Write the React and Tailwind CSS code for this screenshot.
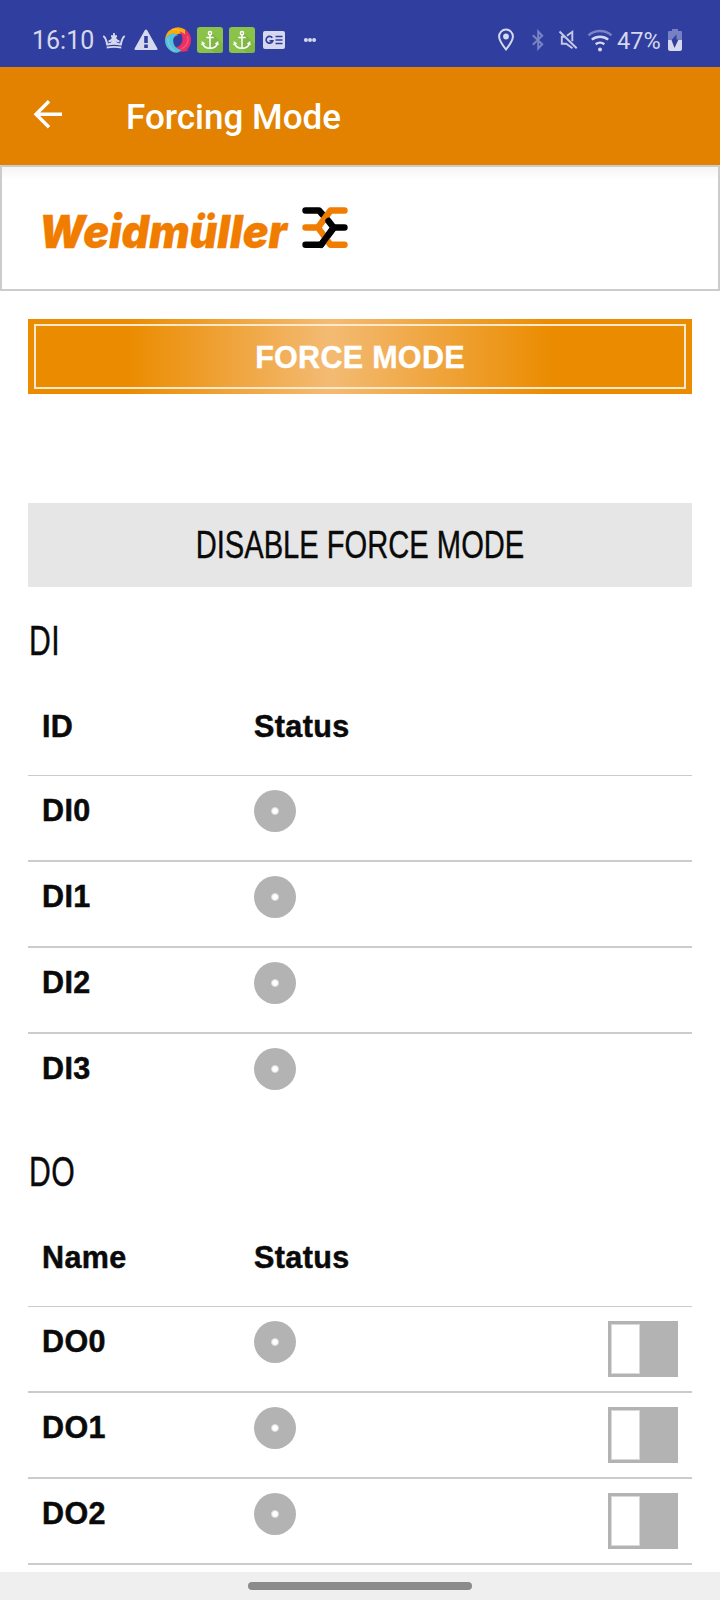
const helv = "font-['Liberation_Sans',Arial,sans-serif]";

function StatusIcons() {
  return (
    <svg className="block h-8 w-[216px] shrink-0" viewBox="102 24 216 32" fill="#d6d8ed">
      <path d="M103.200 36.200c2.400 1 3 3.200 3.900 8.200 4.600-.9 9.200-.9 13.800 0 .9-5 1.500-7.200 3.900-8.200M108.500 41.500c2.200-.2 4-1.200 4.500-4.500M119.500 41.500c-2.200-.2-4-1.200-4.500-4.500" fill="none" stroke="#d6d8ed" strokeWidth="2" />
      <path d="M113.100 33h1.800v2.200h2.100v2h-1.800c.3 2.800.9 4 2.300 5.800h-7c1.400-1.800 2-3 2.300-5.800H111v-2h2.100z" />
      <path d="M106.700 46.600c4.800-.9 9.800-.9 14.600 0v1.800c-4.800-.8-9.800-.8-14.600 0z" />
      <path fillRule="evenodd" d="M146 29.500c.6 0 .9.300 1.200.8l10.200 18.300c.4.800 0 1.400-.8 1.400h-21.200c-.8 0-1.200-.6-.8-1.400l10.200-18.300c.3-.5.600-.8 1.200-.8zM144.200 36v7h3.600v-7zM144.200 44.600v3.400h3.600v-3.400z" />
      <path d="M165 40a13 13 0 0 1 20.500-10.300c-.2 1.500-.2 3 .3 5-3-1.400-6-1.400-8.500-.2-4.500-.3-8.800 1.500-12.300 5.500z" fill="#ffa808" />
      <path d="M179.500 31c2.500.8 4.800 2.200 6.300 3.700-.5-1.500-.6-3.500-.3-5 3.500 2.500 5.500 6.300 5.500 10.300s-1.500 7.500-4.300 10h3c-4.700 1.800-10.700 3.500-17.200-2.500 6 .5 10-3 10-8.500 0-3-1.200-5.500-3-8z" fill="#ed2f62" />
      <path d="M165 40c1.500-4.500 5-7 9.500-6.300 1.300.2 2.500.8 3.500 1.600-3.500.4-5 3-4.800 6 .3 4.500 3.300 7.700 8.300 8.700-1.500 1.700-3.200 2.500-5 2.800-6.500-.5-11.500-5.800-11.500-12.800z" fill="#56bfd9" />
      <path d="M172 29.500c5-.8 8.500.6 13 4.500M187.500 36c1.500 5-.5 10-6 13M168 38c-.5 5 2 10 7 13.500" fill="none" stroke="#fff" strokeOpacity=".22" strokeWidth="1.200" />
      {[197, 229].map((x) => (
        <g key={x} transform={`translate(${x} 27)`}>
          <rect width="26" height="26" rx="3" fill="#8bc34a" />
          <path d="M15 6l11 11v6a3 3 0 0 1-3 3H18l-7-7z" fill="#7cb342" fillOpacity=".75" />
          <g fill="none" stroke="#fff" strokeWidth="1.500">
            <circle cx="13" cy="6.200" r="1.600" />
            <path d="M13 8v13.500M9.300 10.500h7.400M5.500 16c1 3.800 4 5.300 7.500 5.300s6.500-1.500 7.500-5.300" />
          </g>
          <path d="M4.300 18.200l.5-4.200 3.500 2.700zM21.700 18.200l-.5-4.200-3.500 2.700z" fill="#fff" />
        </g>
      ))}
      <rect x="263" y="31" width="22" height="18" rx="2" />
      <path d="M272.300 37.800a3.400 3.400 0 1 0 .5 3h-3.300M275.500 36.500h7M275.500 40h7M275.500 43.500h7" fill="none" stroke="#303f9f" strokeWidth="1.700" />
      <circle cx="305.900" cy="40" r="2" />
      <circle cx="310" cy="40" r="2" />
      <circle cx="314.100" cy="40" r="2" />
    </svg>
  );
}

function SystemIcons() {
  return (
    <svg className="block h-8 w-[116px] shrink-0" viewBox="496 24 116 32" fill="none" stroke="#d6d8ed">
      <path d="M506 49.500c-4.500-5.700-6.900-9.500-6.900-13a6.900 6.900 0 0 1 13.800 0c0 3.500-2.400 7.300-6.900 13z" strokeWidth="2" />
      <circle cx="506" cy="36.500" r="2.900" fill="#d6d8ed" stroke="none" />
      <path d="M532.800 35.300l9.400 8.900-4 4.200V31.600l4 4.200-9.400 8.900" stroke="#7a83c5" strokeWidth="2" />
      <path d="M559.500 31.500l17.200 16.800M564.800 36.700h-3v7h4.500l6.200 4.500M567 35.800l5.300-4v9.500" strokeWidth="1.900" stroke="#c6c9e5" />
      <path d="M588.500 35.300c6.500-5.800 16.500-5.800 23 0" stroke="#7a83c5" strokeWidth="2.400" />
      <path d="M591.800 39.700c4.700-4 11.700-4 16.400 0M595.700 44.300c2.500-2 6.100-2 8.600 0" strokeWidth="2.400" />
      <circle cx="600" cy="49.500" r="2" fill="#d6d8ed" stroke="none" />
    </svg>
  );
}

function Battery() {
  return (
    <svg className="block h-8 w-4 shrink-0" viewBox="667 24 16 32">
      <path d="M672 29h6v2h3a1 1 0 0 1 1 1v8h-14v-8a1 1 0 0 1 1-1h3z" fill="#7780c2" />
      <path d="M668 40h14v9a2 2 0 0 1-2 2h-10a2 2 0 0 1-2-2z" fill="#d6d8ed" />
      <path d="M676.500 34.500v5h2l-4 8.500-3-8z" fill="#303f9f" />
    </svg>
  );
}

function Logo() {
  return (
    <svg className="block h-[60px] w-[320px]" viewBox="36 198 320 60">
      <text x="39" y="248" textLength="248" lengthAdjust="spacingAndGlyphs" fill="#f07d00" stroke="#f07d00" strokeWidth=".3" className="font-['Inter',sans-serif] text-[45px] font-black italic">
        Weidmüller
      </text>
      <g fill="none" strokeWidth="6.400" strokeLinecap="round" strokeLinejoin="round">
        <path d="M305.500 210.500h13.500l8 9M305.500 244.800h15.500l13-17.300" stroke="#000" />
        <path d="M344.500 210.500h-14l-12.500 17 12.500 17.300h14M305.500 227.500h12" stroke="#f07d00" />
        <path d="M328.500 221l5 6.500h11M321 244.800l12.500-17.300" stroke="#000" />
      </g>
      <path d="M325.300 223.500l3.200 4-3.200 4-3.200-4z" fill="#fff" />
    </svg>
  );
}

function Lamp() {
  return (
    <span className="mt-[14px] flex size-[42px] items-center justify-center rounded-full bg-[#b3b3b3]">
      <span className="size-2 rounded-full border-[0.5px] border-[#d9d9d9] bg-white" />
    </span>
  );
}

function Toggle() {
  return (
    <span className="mt-[14px] mr-[14px] ml-auto flex h-14 w-[70px] bg-[#b3b3b3] p-[3px]">
      <span className="h-full w-[29px] border border-[#d9d9d9] bg-white" />
    </span>
  );
}

function Section({ title, nameLabel, rows, toggles, className, rowsClass }) {
  return (
    <section className={className}>
      <h2 className="h-[60px] pt-[1px] pl-[1px] text-[42px] leading-[60px]">
        <span className="inline-block origin-left scale-x-[0.72] tracking-[0.5px] [-webkit-text-stroke:0.4px_#0a0a0a]">{title}</span>
      </h2>
      <div className="flex h-[106px] border-b border-[#cccccc] pl-[14px] text-[30.500px] leading-[60px] font-bold tracking-[0.4px] [-webkit-text-stroke:0.5px_#0a0a0a]">
        <span className="w-[212px] pt-[26px]">{nameLabel}</span>
        <span className="pt-[26px]">Status</span>
      </div>
      <div className={rowsClass}>
        {rows.map((id) => (
          <div key={id} className="flex h-[86px] border-b-2 border-[#cccccc] pl-[14px]">
            <span className="w-[212px] pt-[4px] text-[30.500px] leading-[60px] font-bold tracking-[0.4px] [-webkit-text-stroke:0.5px_#0a0a0a]">{id}</span>
            <Lamp />
            {toggles && <Toggle />}
          </div>
        ))}
      </div>
    </section>
  );
}

export default function App() {
  return (
    <div className={`flex h-[1600px] w-[720px] flex-col overflow-hidden bg-white text-[#0a0a0a] ${helv}`}>
      <header className="flex h-[67px] shrink-0 items-center bg-[#303f9f] pt-[13px] pl-[32px] font-['Roboto',sans-serif] text-[#d6d8ed]">
        <span className="w-[70px] shrink-0 pt-[2px] text-[25px] leading-8">16:10</span>
        <StatusIcons />
        <span className="w-[178px] shrink-0" />
        <SystemIcons />
        <span className="w-[55px] shrink-0 pt-[2px] pl-[5px] text-[23.500px] leading-8">47%</span>
        <Battery />
      </header>
      <div className="flex h-[98px] shrink-0 items-center bg-[#e28200] pl-[33px] text-white">
        <svg className="mb-1 block h-8 w-[30px]" viewBox="33 98 30 32" fill="none" stroke="#fff" strokeWidth="3.400">
          <path d="M62 114.300H36M49 101.300l-13 13 13 13" />
        </svg>
        <h1 className="ml-[63px] pt-[5px] font-['Roboto',sans-serif] text-[35px] font-medium">Forcing Mode</h1>
      </div>
      <div className="flex h-[126px] shrink-0 items-start border-2 border-[#cccccc] bg-linear-to-b from-[#f4f4f4] to-white to-10% pt-[31px] pl-[34px]">
        <Logo />
      </div>
      <main className="flex min-h-0 flex-1 flex-col overflow-hidden px-7 pt-7">
        <button className="flex h-[75px] shrink-0 bg-[linear-gradient(90deg,#eb8c00_15%,#f3ba72_45%,#f3ba72_46%,#eb8c00_79%)] p-[6px] pt-[5px] pb-[5px] text-[30.500px] font-bold tracking-[0.3px] text-white [-webkit-text-stroke:0.4px_#fff]">
          <span className="flex h-full w-full items-center justify-center border-2 border-[#fde8cc] pt-[2px]">FORCE MODE</span>
        </button>
        <button className="mt-[109px] flex h-[84px] shrink-0 items-center justify-center bg-[#e6e6e6] pt-[1px] text-[39px] whitespace-nowrap">
          <span className="scale-x-[0.747] [-webkit-text-stroke:0.4px_#0a0a0a]">DISABLE FORCE MODE</span>
        </button>
        <Section className="mt-[23px] shrink-0" rowsClass="*:last:border-transparent" title="DI" nameLabel="ID" rows={["DI0", "DI1", "DI2", "DI3"]} />
        <Section className="mt-[21px] shrink-0" title="DO" nameLabel="Name" rows={["DO0", "DO1", "DO2"]} toggles />
      </main>
      <footer className="flex h-7 shrink-0 justify-center bg-[#efefef] pt-[10px]">
        <span className="h-2 w-[224px] rounded-full bg-[#8b8b8b]" />
      </footer>
    </div>
  );
}
